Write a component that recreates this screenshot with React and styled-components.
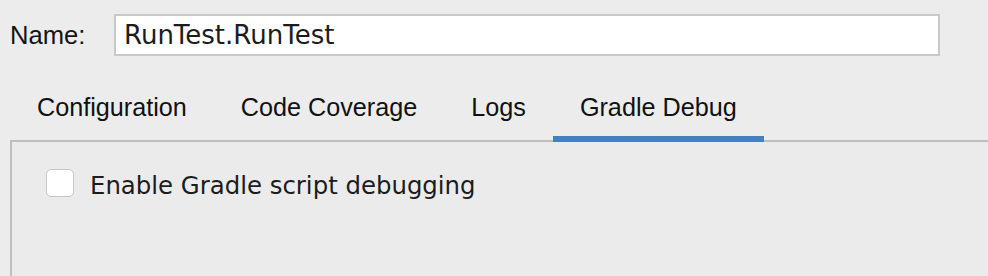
import React, { useState } from "react";
import styled, { createGlobalStyle } from "styled-components";

const tabs = ["Configuration", "Code Coverage", "Logs", "Gradle Debug"];

const App = () => {
  const [active, setActive] = useState(3);
  const [name, setName] = useState("RunTest.RunTest");
  const [debug, setDebug] = useState(false);

  return (
    <Wrapper>
      <GlobalStyle />
      <NameRow>
        <Label>Name:</Label>
        <NameInput value={name} onChange={(e) => setName(e.target.value)} />
      </NameRow>

      <TabBar>
        {tabs.map((t, i) => (
          <Tab key={t} $active={i === active} onClick={() => setActive(i)}>
            {t}
          </Tab>
        ))}
        <TabFiller />
      </TabBar>

      <Panel>
        <CheckRow onClick={() => setDebug((d) => !d)}>
          <Box $checked={debug}>{debug && "✓"}</Box>
          <CheckLabel>Enable Gradle script debugging</CheckLabel>
        </CheckRow>
      </Panel>
    </Wrapper>
  );
};

export default App;

const GlobalStyle = createGlobalStyle`
  html, body {
    margin: 0;
    padding: 0;
    background: #ececec;
  }
  body {
    font-family: "Liberation Sans", Arial, sans-serif;
    overflow: hidden;
  }
`;

const Wrapper = styled.div`
  width: 988px;
  height: 276px;
  padding-left: 10px;
  box-sizing: border-box;
  background: #ececec;
  overflow: hidden;
`;

const NameRow = styled.div`
  display: flex;
  align-items: center;
  padding-top: 14px;
`;

const Label = styled.span`
  width: 104px;
  font-size: 25.6px;
  color: #141414;
`;

const NameInput = styled.input`
  width: 826px;
  height: 42px;
  box-sizing: border-box;
  border: 2px solid #c9c9c9;
  background: #fff;
  padding: 0 8px;
  font-family: "DejaVu Sans", sans-serif;
  font-size: 26px;
  color: #1c1c1c;
  outline: none;
`;

const TabBar = styled.div`
  display: flex;
  margin-top: 22px;
  width: 1000px;
`;

const Tab = styled.div`
  padding: 14px 27px 20px;
  font-size: 25.2px;
  line-height: 30px;
  color: #111;
  cursor: default;
  box-shadow: inset 0 ${(p) => (p.$active ? "-6px" : "-2px")} 0
    ${(p) => (p.$active ? "#3e80c9" : "#bebebe")};
`;

const TabFiller = styled.div`
  flex: 1;
  box-shadow: inset 0 -2px 0 #bebebe;
`;

const Panel = styled.div`
  border-left: 2px solid #bebebe;
  background: #ebebeb;
  min-height: 200px;
  padding: 27px 0 0 34px;
`;

const CheckRow = styled.div`
  display: flex;
  align-items: flex-start;
  gap: 16px;
  cursor: default;
`;

const Box = styled.div`
  width: 28px;
  height: 28px;
  box-sizing: border-box;
  border: 1px solid #c6c6c6;
  border-radius: 5px;
  background: ${(p) => (p.$checked ? "#3e80c9" : "#fff")};
  color: #fff;
  display: flex;
  align-items: center;
  justify-content: center;
  font-size: 20px;
`;

const CheckLabel = styled.span`
  font-family: "DejaVu Sans", sans-serif;
  font-size: 24.4px;
  line-height: 28px;
  margin-top: 3px;
  color: #1c1c1c;
`;
